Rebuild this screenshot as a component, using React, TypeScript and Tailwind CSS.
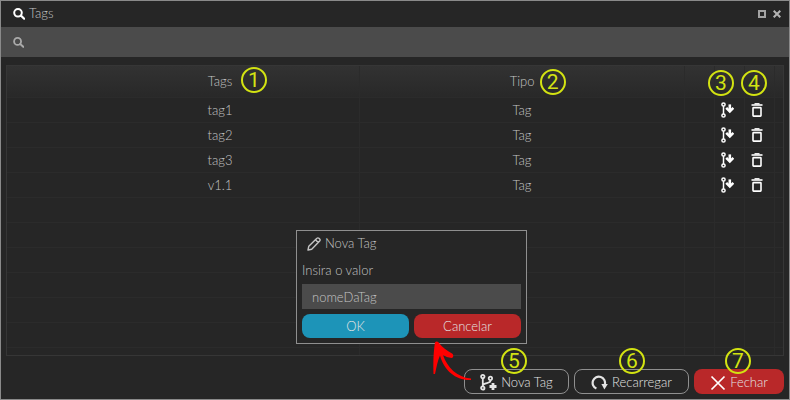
import clsx from "clsx";

const tags = ["tag1", "tag2", "tag3", "v1.1"];
const emptyRows = [1, 2, 3, 4, 5, 6, 7];

const cell = "p-0 border-r border-b border-[#2b2b2b] font-light";

function SearchIcon({ className }: { className?: string }) {
  return (
    <svg viewBox="0 0 12 12" className={className} fill="none" stroke="currentColor">
      <circle cx="5" cy="4.8" r="3.8" strokeWidth="2" />
      <path d="M7.8 7.8l1 .6 2.4 2.3" strokeWidth="2.2" strokeLinecap="round" />
    </svg>
  );
}

function CheckoutIcon() {
  return (
    <svg viewBox="0 0 13 16" className="w-[13px] h-4" fill="none" stroke="currentColor">
      <circle cx="2.5" cy="2.5" r="1.6" strokeWidth="1.5" />
      <circle cx="2.5" cy="13.5" r="1.6" strokeWidth="1.5" />
      <path d="M2.5 4v8" strokeWidth="1.5" />
      <path d="M8.8 2.4v6" strokeWidth="2.6" />
      <path d="M5.2 5.8l3.6 3.6 3.6-3.6" strokeWidth="2.6" />
    </svg>
  );
}

function TrashIcon() {
  return (
    <svg viewBox="0 0 12 14" className="w-3 h-3.5" fill="none" stroke="currentColor">
      <path d="M3.5.8h5" strokeWidth="1.4" />
      <path d="M.5 2h11" strokeWidth="1.6" />
      <rect x="2" y="4.6" width="8" height="8.5" rx=".6" strokeWidth="1.6" />
    </svg>
  );
}

function BranchAddIcon() {
  return (
    <svg viewBox="0 0 17 17" className="w-[17px] h-[17px]" fill="none" stroke="currentColor">
      <circle cx="2.8" cy="2.6" r="1.7" strokeWidth="1.8" />
      <circle cx="2.8" cy="14" r="1.7" strokeWidth="1.8" />
      <circle cx="10.4" cy="4.4" r="1.7" strokeWidth="1.8" />
      <path d="M2.8 4.4v8M10.4 6v1c0 2.6-7.4 1.4-7.4 4.4" strokeWidth="1.8" />
      <path d="M13 9v7M9.5 12.5h7" strokeWidth="2.8" />
    </svg>
  );
}

function ReloadIcon() {
  return (
    <svg viewBox="0 0 17 16" className="w-[17px] h-4" fill="none" stroke="currentColor">
      <path d="M5.4 13.6A6.2 6.2 0 1 1 13.8 9.6" strokeWidth="2.2" />
      <path d="M10.4 9h6.4l-3.4 5.4z" fill="currentColor" stroke="none" />
    </svg>
  );
}

function Marker({ children, className }: { children: number; className: string }) {
  return (
    <span
      className={clsx(
        "absolute z-20 pointer-events-none flex items-center justify-center w-[26px] h-[26px] rounded-full border-2 border-[#d3e312] font-['Roboto','Open_Sans',sans-serif] text-[21px] leading-[22px] font-normal text-[#d3e312]",
        className
      )}
    >
      {children}
    </span>
  );
}

function NewTagDialog() {
  return (
    <form
      role="dialog"
      aria-labelledby="dialog-title"
      className="absolute left-[295px] bottom-[55px] z-10 w-[231px] border border-[#8f8f8f] bg-[#262626] px-[5px] pb-[5px]"
    >
      <h2 id="dialog-title" className="flex items-center gap-1 h-[26px] pl-[5px]">
        <svg viewBox="0 0 14 14" className="w-3.5 h-3.5" fill="none" stroke="currentColor" strokeWidth="1.4" strokeLinejoin="round">
          <path d="M1 13l.8-3.8L9.9 1.3a1.4 1.4 0 0 1 2 0l.8.8a1.4 1.4 0 0 1 0 2L4.7 12.2zM8.5 2.8l2.7 2.7" />
        </svg>
        Nova Tag
      </h2>
      <label htmlFor="tag-name" className="flex items-center h-[27px]">
        Insira o valor
      </label>
      <input
        id="tag-name"
        type="text"
        defaultValue="nomeDaTag"
        className="block w-full h-[25px] px-2.5 bg-[#4b4b4b] outline-0"
      />
      <div className="grid grid-cols-2 gap-[5px] mt-[5px] text-[#e4e4e4]">
        <button type="button" className="h-6 pt-0.5 rounded-lg bg-[#1d94b8]">
          OK
        </button>
        <button type="button" className="h-6 pt-0.5 rounded-lg bg-[#b92829]">
          Cancelar
        </button>
      </div>
    </form>
  );
}

export default function App() {
  return (
    <div className="relative flex flex-col h-screen overflow-hidden border border-[#8a8a8a] bg-[#262626] font-['Lato',sans-serif] text-[13px] font-light text-[#c4c4c4]">
      <header className="flex items-center h-[26px] shrink-0 pl-3 pr-2">
        <SearchIcon className="w-3 h-3 text-white" />
        <h1 className="ml-1 flex-1">Tags</h1>
        <button type="button" aria-label="Maximizar" className="w-2 h-2 border-2 border-[#a3a3a3]" />
        <button type="button" aria-label="Fechar janela" className="ml-[7px] text-[#b4b4b4]">
          <svg viewBox="0 0 8 8" className="w-2 h-2" stroke="currentColor" strokeWidth="2">
            <path d="M.7.7l6.6 6.6M7.3.7L.7 7.3" />
          </svg>
        </button>
      </header>

      <div className="flex items-center h-[30px] shrink-0 pl-3 bg-[#4b4b4b]">
        <SearchIcon className="w-[11px] h-[11px] text-[#aaaaaa]" />
        <input type="search" aria-label="Pesquisar" className="flex-1 h-full px-2 bg-transparent outline-0" />
      </div>

      <main className="relative flex-1 min-h-0 mt-2 mx-[5px] border border-[#363636] overflow-hidden">
        <table className="w-full table-fixed border-separate border-spacing-0 text-center">
          <colgroup>
            <col className="w-[45.5%]" />
            <col />
            <col className="w-[30px]" />
            <col className="w-[30px]" />
            <col className="w-[30px]" />
            <col className="w-2" />
          </colgroup>
          <thead>
            <tr className="h-8 bg-linear-to-b from-[#323232] to-[#282828]">
              <th className={clsx(cell, "pl-[74px]")}>
                <span className="relative">
                  Tags
                  <Marker className="left-[33px] -top-1.5">{1}</Marker>
                </span>
              </th>
              <th className={cell}>
                <span className="relative">
                  Tipo
                  <Marker className="left-[30px] -top-1">{2}</Marker>
                </span>
              </th>
              <th className={cell} />
              <th className={clsx(cell, "relative")}>
                <Marker className="-left-[7px] top-1">{3}</Marker>
              </th>
              <th className={clsx(cell, "relative")}>
                <Marker className="-left-1 top-1">{4}</Marker>
              </th>
              <th className="p-0 border-b border-[#2b2b2b]" />
            </tr>
          </thead>
          <tbody>
            {tags.map((tag) => (
              <tr key={tag} className="h-[25px]">
                <td className={clsx(cell, "pl-[74px] pt-0.5")}>{tag}</td>
                <td className={clsx(cell, "pt-0.5")}>Tag</td>
                <td className={cell} />
                <td className={clsx(cell, "pr-1 text-white")}>
                  <button type="button" aria-label={`Checkout ${tag}`} className="block mx-auto">
                    <CheckoutIcon />
                  </button>
                </td>
                <td className={clsx(cell, "pr-1.5 text-white")}>
                  <button type="button" aria-label={`Excluir ${tag}`} className="block mx-auto">
                    <TrashIcon />
                  </button>
                </td>
                <td className="p-0 border-b border-[#2b2b2b]" />
              </tr>
            ))}
            {emptyRows.map((row) => (
              <tr key={row} className="h-[25px]">
                <td className={cell} />
                <td className={cell} />
                <td className={cell} />
                <td className={cell} />
                <td className={cell} />
                <td className="p-0 border-b border-[#2b2b2b]" />
              </tr>
            ))}
          </tbody>
        </table>
      </main>

      <footer className="flex justify-end gap-[5px] shrink-0 pt-[13px] pb-[5px] px-[5px] text-[#e4e4e4]">
        <button
          type="button"
          className="relative flex items-center justify-center gap-1 w-[105px] h-[25px] pt-0.5 rounded-lg border border-[#8f8f8f]"
        >
          <BranchAddIcon />
          Nova Tag
          <Marker className="left-9 -top-[22px]">{5}</Marker>
          {/* arrow from the button to the dialog */}
          <svg
            viewBox="0 0 45 45"
            className="absolute z-20 -left-[37px] -top-8 w-[45px] h-[45px] pointer-events-none"
            fill="#ff0000"
          >
            <path d="M7 4.5C8 3 10 3.5 11 5C14 9 19 13 24 15.5C26 17 25.5 20 23.5 20C20 19.5 17.5 18.5 15 17C19 29 29 39.5 43 40.5L43 42C29 43 16 33 12 17.5C9.5 23 8.5 29 7 36L5.5 36C5 25 5.5 13 7 4.5z" />
          </svg>
        </button>
        <button
          type="button"
          className="relative flex items-center justify-center gap-1 w-[115px] h-[25px] pt-0.5 rounded-lg border border-[#8f8f8f]"
        >
          <ReloadIcon />
          Recarregar
          <Marker className="left-11 -top-[22px]">{6}</Marker>
        </button>
        <button
          type="button"
          className="relative flex items-center justify-center gap-1 w-[90px] h-[25px] pt-0.5 rounded-lg bg-[#b92829]"
        >
          <svg viewBox="0 0 16 16" className="w-4 h-4" stroke="#ffffff" strokeWidth="1.7">
            <path d="M1.5 1.5l13 13M14.5 1.5l-13 13" />
          </svg>
          Fechar
          <Marker className="left-[31px] -top-[21px]">{7}</Marker>
        </button>
      </footer>

      <NewTagDialog />
    </div>
  );
}
